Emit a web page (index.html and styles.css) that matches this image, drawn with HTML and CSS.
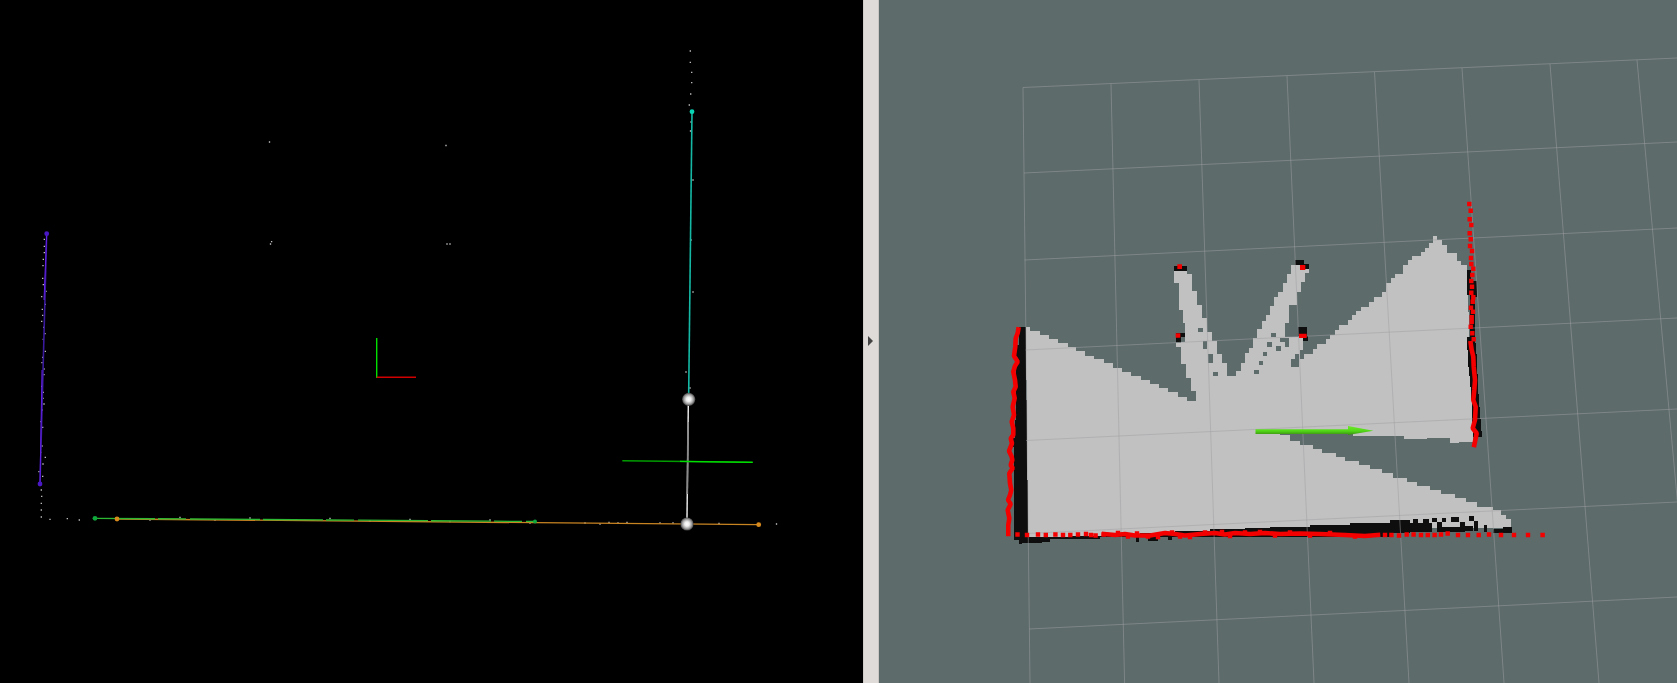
FILE: index.html
```html
<!DOCTYPE html>
<html lang="en">
<head>
<meta charset="utf-8">
<title>SLAM viewers</title>
<link rel="stylesheet" href="styles.css">
</head>
<body>
<main class="app">
  <section class="pane pane-graph">
    <svg class="view" viewBox="0 0 863 683" aria-label="Pose graph view">
      <defs>
        <radialGradient id="node">
          <stop offset="0" stop-color="#ffffff"/>
          <stop offset=".35" stop-color="#ececec"/>
          <stop offset=".72" stop-color="#9c9c9c"/>
          <stop offset="1" stop-color="#404040"/>
        </radialGradient>
      </defs>

      <path class="specks" d="M44.3 239.3h.01M44.3 246.3h.01M44.3 252.7h.01M43.3 259.3h.01M43 265.7h.01M42.7 278.3h.01M43.3 284.7h.01M46 291.3h.01M41.7 296.7h.01M45.3 304.3h.01M42.3 309.3h.01M42.7 315.3h.01M41.7 321.3h.01M43.7 327.3h.01M45 333.7h.01M43.3 339.3h.01M45.3 351.3h.01M42.7 357.3h.01M42 362.7h.01M44 369h.01M44 374.7h.01M41.7 386.3h.01M43.3 392.3h.01M43 398.3h.01M44 404h.01M42.3 410h.01M41 421.7h.01M42.7 427.3h.01M42 446h.01M40.7 452.3h.01M45.3 457.3h.01M43 464h.01M39 471.7h.01M42.7 476.3h.01M41.3 490h.01M41.7 496.3h.01M41.3 503.3h.01M41.3 510h.01M41.3 517h.01M50 519.3h.01M67.3 518.7h.01M79.3 520h.01"/>
      <path class="specks" d="M690.3 51h.01M690.3 62.3h.01M691.7 72.3h.01M691.7 82.7h.01M690.7 94h.01M689.3 105h.01M691 122h.01M690.5 131h.01M693 180h.01M691 240h.01M693 292h.01M686 372h.01M690 388h.01M269.5 142h.01M446 145.5h.01M271.6 241.7h.01M270.5 244h.01M447 244h.01M450 244h.01M776.5 524h.01M585 523h.01M600 524h.01M609 522.5h.01M618 523h.01M627 522.5h.01M660 523h.01M673 523h.01M719 523.5h.01M150 520h.01M180 517.5h.01M215 520h.01M250 518h.01M290 520h.01M330 518.5h.01M370 521h.01M410 519.5h.01M450 521.5h.01M490 520h.01M530 523h.01"/>

      <path class="edge edge-purple" d="M46.7 233.7 40 484"/>
      <path class="edge edge-purple-hi" d="M46.7 233.7 44 300M42 370 40 484"/>
      <path class="edge edge-cyan" d="M692 111.7 688.7 393"/>
      <path class="edge edge-orange" d="M117 519 758.7 524.7"/>
      <path class="edge edge-green" d="M95 518.3 535 521.5"/>
      <path class="edge edge-link" d="M688.3 405 687 518"/>
      <path class="edge edge-link-mid" d="M688 422 687.3 494"/>
      <path class="edge edge-cross" d="M622.3 460.7 752.7 462.3"/>
      <path class="edge edge-cross-hi" d="M680 461.4 752.7 462.3"/>

      <path class="axis axis-y" d="M376.7 338V378"/>
      <path class="axis axis-x" d="M376.7 377.3H416"/>

      <circle class="dot dot-purple" cx="46.7" cy="233.7" r="2.4"/>
      <circle class="dot dot-purple" cx="40" cy="484" r="2.4"/>
      <circle class="dot dot-cyan" cx="692" cy="111.7" r="2.4"/>
      <circle class="dot dot-green" cx="95" cy="518.3" r="2.4"/>
      <circle class="dot dot-green" cx="535" cy="521.5" r="2"/>
      <circle class="dot dot-orange" cx="117" cy="519" r="2.4"/>
      <circle class="dot dot-orange" cx="758.7" cy="524.7" r="2.4"/>
      <circle cx="688.7" cy="399.3" r="6.6" fill="url(#node)"/>
      <circle cx="687" cy="524" r="6.6" fill="url(#node)"/>
    </svg>
  </section>

  <div class="splitter"><span class="splitter-arrow"></span></div>

  <section class="pane pane-map">
    <svg class="view" viewBox="879 0 798 683" aria-label="Occupancy map view">
      <defs>
        <linearGradient id="arrow" x1="0" y1="0" x2="0" y2="1">
          <stop offset="0" stop-color="#6ee82a"/>
          <stop offset=".55" stop-color="#52d818"/>
          <stop offset="1" stop-color="#3a8c12"/>
        </linearGradient>
      </defs>

      <path class="free" d="M1026 327H1030V331H1040V335H1049V339H1058V343H1068V347H1076V351H1085V356H1094V359H1104V363H1113V368H1122V372H1131V376H1141V380H1150V384H1159V388H1168V392H1178V397H1187V401H1196V391H1191V378H1186V364H1181V347H1176V343H1181V342H1185V323H1183V310H1179V283H1174V271H1187V274H1192V291H1197V305H1202V318H1207V332H1212V341H1217V354H1222V363H1227V376H1236V371H1241V363H1245V353H1249V348H1253V338H1257V329H1262V321H1266V315H1270V306H1274V297H1278V292H1283V283H1287V274H1291V265H1309V273H1305V282H1301V292H1297V305H1289V323H1285V337H1299V336H1303V350H1300V359H1304V354H1313V349H1317V344H1326V339H1330V335H1335V330H1339V325H1348V320H1352V315H1356V311H1361V307H1369V302H1374V297H1382V292H1386V283H1391V278H1395V274H1403V265H1408V260H1412V256H1421V252H1425V248H1429V243H1433V236H1437V240H1442V245H1447V253H1457V261H1461V265H1467V270L1473 437V442H1459V443H1450V438H1427V439H1404V436H1353V434H1280V435H1290V441H1300V445H1313V449H1322V453H1336V457H1345V461H1359V465H1370V469H1382V473H1393V478H1407V482H1417V486H1430V490H1441V494H1455V498H1466V502H1477V507H1493V510H1501V515H1506V519H1511V528H1400L1028 538Z"/>

      <g transform="translate(1150 250) scale(.33333)">
        <path class="unknown" d="M143 233h17v13h-17zM160 272h12v26h-12zM175 312h13v26h-13zM190 367h14v11h-14zM363 249h14v13h-14zM350 277h15v13h-15zM378 288h14v14h-14zM340 305h11v12h-11zM327 333h11v12h-11zM312 360h14v12h-14zM390 263h28v12h-28zM405 275h13v15h-13zM434 312h14v38h-14zM422 326h12v26h-12z"/>
        <path class="occupied" d="M72 47h40v15h-40zM436 30h26v15h-26zM450 42h27v15h-27zM78 250h27v12h-27zM78 262h14v13h-14zM445 232h25v26h-25zM460 258h13v14h-13z"/>
      </g>

      <path class="occupied" d="M1021 327H1026V400H1027V480H1028V538H1014V447H1012V438H1015V420H1016V345H1019V327Z"/>
      <path class="occupied" d="M1467 270H1471V281H1477V297H1475V337L1477 360 1478 387 1480 413 1482 437H1473L1472 407 1470 380 1468 362 1467 337H1470V295H1467Z"/>
      <path class="occupied" d="M1014 538H1028V537H1070V536H1102V534H1140V533H1175V531H1210V529H1245V528H1270V527H1310V525H1350V523H1392V537H1100V539H1050V542H1042V543H1022V544H1019V540H1014ZM1136 536h3v6h-3zM1148 536h10v5h-10zM1168 536h4v4h-4z"/>
      <g transform="translate(1330 490) scale(.33333)">
        <path class="occupied" d="M180 90h60v38h-60zM240 100h65v25h-65zM250 87h15v13h-15zM280 87h18v13h-18zM307 85h15v12h-15zM322 97h13v28h-13zM335 85h12v10h-12zM362 82h26v13h-26zM335 110h70v15h-70zM390 95h15v15h-15zM405 107h25v15h-25zM418 78h14v14h-14zM432 92h13v30h-13zM462 105h10v20h-10zM490 118h55v10h-55zM520 112h25v6h-25z"/>
      </g>

      <path class="grid" d="M1023 87.5 1030 683M1111 83.6 1124.6 683M1199 79.7 1219 683M1287 75.8 1314 683M1374.5 71.9 1409 683M1462 68 1504 683M1550 64 1599 683M1637 60 1694 683"/>
      <path class="grid" d="M1023 87.5 1677 58M1024 173 1677 142M1024.5 260 1677 228M1025.5 350 1677 318M1026 440.5 1677 409M1027 533.5 1677 502M1029 629 1677 597"/>

      <path class="scan-line" d="M1018.3 329.3 1017.7 333 1015.7 338.3 1015.3 346.7 1014 356 1017.7 361.7 1015 366 1013.3 371.7 1015 380 1015.7 386.7 1013.3 391.7 1014.7 398.3 1012.7 406.7 1014 415 1011.7 421.7 1013.3 428.3 1013.3 435 1010.7 438.3 1012 443.3 1009 451 1011.7 456.7 1012.3 460 1010.7 465 1012.7 468.3 1009.3 473.3 1010 483.3 1011.3 490 1010 495 1008 500 1010.7 504 1007.7 510 1009.3 518.3 1008.3 525 1008.3 534"/>
      <path class="scan-line" d="M1470.7 343.3 1471.7 350 1473.3 356.7 1473.7 366.7 1475 380 1474.3 390 1473.3 400 1475.7 406.7 1475 420 1472.7 428.3 1476.7 433.3 1474.3 445"/>
      <path class="scan-line" d="M1104 534 1115 535 1125 534 1135 535.5 1150 535.5 1165 533 1175 534 1185 535.5 1200 534 1215 533 1225 534.5 1235 533 1250 534 1265 533 1280 534 1300 533.5 1320 534 1345 535 1365 536 1378 535"/>
      <path class="scan-dots" d="M1469.3 204h.01M1470.7 210.7h.01M1469.7 219.3h.01M1471.3 225h.01M1469.7 233.3h.01M1470.7 239.3h.01M1470 246h.01M1472 251h.01M1471 258h.01M1471.3 264h.01M1473.3 268.7h.01M1472.3 275h.01M1471.3 281h.01M1472 286.7h.01M1471.3 292.7h.01M1473.3 297.3h.01M1472.7 301.7h.01M1471 307.7h.01M1473 311.7h.01M1471.7 317.3h.01M1471.7 321.7h.01M1470.7 326.7h.01M1472.3 333.3h.01M1473.7 339.3h.01"/>
      <path class="scan-dots" d="M1017.5 534.5h.01M1027 535h.01M1038 534.5h.01M1045.8 535h.01M1055.4 534.5h.01M1063 535h.01M1070.3 535h.01M1078 534.5h.01M1086 534h.01M1091 535h.01M1095.6 535.5h.01M1103.6 534.5h.01M1118 533h.01M1128 536.5h.01M1137 533.5h.01M1148 536.5h.01M1158 537h.01M1172 532.5h.01M1180 536.5h.01M1190 537h.01M1205 532.5h.01M1222 532h.01M1230 536h.01M1245 532.5h.01M1260 532h.01M1275 535.5h.01M1290 532.5h.01M1310 535.5h.01M1330 533h.01M1355 536.5h.01M1385 535h.01M1391.4 535h.01M1399 535.5h.01M1406.7 534.5h.01M1413.6 534.5h.01M1421 535h.01M1427.8 535h.01M1434.6 535h.01M1441 534.5h.01M1447.7 533.5h.01M1458 535h.01M1468 535h.01M1478.7 535h.01M1489 534.5h.01M1501 535h.01M1514 535h.01M1528 535h.01M1542.6 535h.01"/>
      <g transform="translate(1150 250) scale(.33333)">
        <path class="scan-fill" d="M82 43h14v14h-14zM450 45h16v15h-16zM77 250h14v13h-14zM447 251h23v13h-23z"/>
      </g>

      <path class="arrow-body" d="M1255.5 429.3H1348V426L1373.4 430.7 1348 435V434H1255.5Z"/>
    </svg>
  </section>
</main>
</body>
</html>
```
FILE: styles.css
```css
html, body {
  margin: 0;
  height: 100%;
  overflow: hidden;
  background: #000;
}

.app {
  display: flex;
  height: 100vh;
}

.pane {
  min-width: 0;
  height: 100%;
}

.pane-graph {
  flex: 0 0 863px;
  background: #000;
}

.pane-map {
  flex: 1 1 0;
  background: #5d6b6b;
}

.view {
  display: block;
  width: 100%;
  height: 100%;
}

.splitter {
  flex: 0 0 16px;
  box-sizing: border-box;
  display: flex;
  align-items: center;
  padding-left: 4px;
  background: #dedbd9;
  border-left: 1px solid #cfccca;
  border-right: 1px solid #c9c6c4;
}

.splitter-arrow {
  width: 0;
  height: 0;
  margin-bottom: 2px;
  border-top: 5px solid transparent;
  border-bottom: 5px solid transparent;
  border-left: 5px solid #444;
}

.specks {
  fill: none;
  stroke: #c4c4c4;
  stroke-width: 1.3;
  stroke-linecap: square;
}

.edge {
  fill: none;
  stroke-width: 1.3;
}

.edge-purple { stroke: #3a1a9c; stroke-width: 1.6; }
.edge-purple-hi { stroke: #6420e8; stroke-width: 1; }
.edge-cyan { stroke: #14b8a4; stroke-width: 1.6; }
.edge-orange { stroke: #c98422; }
.edge-green { stroke: #2cb832; stroke-dasharray: 60 3 28 4 70 3; }
.edge-link { stroke: #f4f4f4; stroke-width: 1.4; }
.edge-link-mid { stroke: #8a8a8a; stroke-width: 1.6; }
.edge-cross { stroke: #009c00; stroke-width: 1.6; }
.edge-cross-hi { stroke: #00e000; stroke-width: 1.3; }

.axis {
  fill: none;
  stroke-width: 1.4;
}

.axis-y { stroke: #00e000; }
.axis-x { stroke: #d00000; }

.dot-purple { fill: #4a18c4; }
.dot-cyan { fill: #08d4b4; }
.dot-green { fill: #10a83c; }
.dot-orange { fill: #d98a1c; }

.free {
  fill: #c1c1c1;
  shape-rendering: crispEdges;
}

.unknown {
  fill: #5d6b6b;
  shape-rendering: crispEdges;
}

.occupied {
  fill: #0e0e0e;
  shape-rendering: crispEdges;
}

.grid {
  fill: none;
  stroke: #a0a0a4;
  stroke-opacity: .5;
  stroke-width: 1;
}

.scan-line {
  fill: none;
  stroke: #f40000;
  stroke-width: 4.6;
  stroke-linejoin: bevel;
  stroke-linecap: square;
}

.scan-dots {
  fill: none;
  stroke: #f40000;
  stroke-width: 4.4;
  stroke-linecap: square;
}

.scan-fill {
  fill: #f40000;
}

.arrow-body {
  fill: url(#arrow);
}
```
